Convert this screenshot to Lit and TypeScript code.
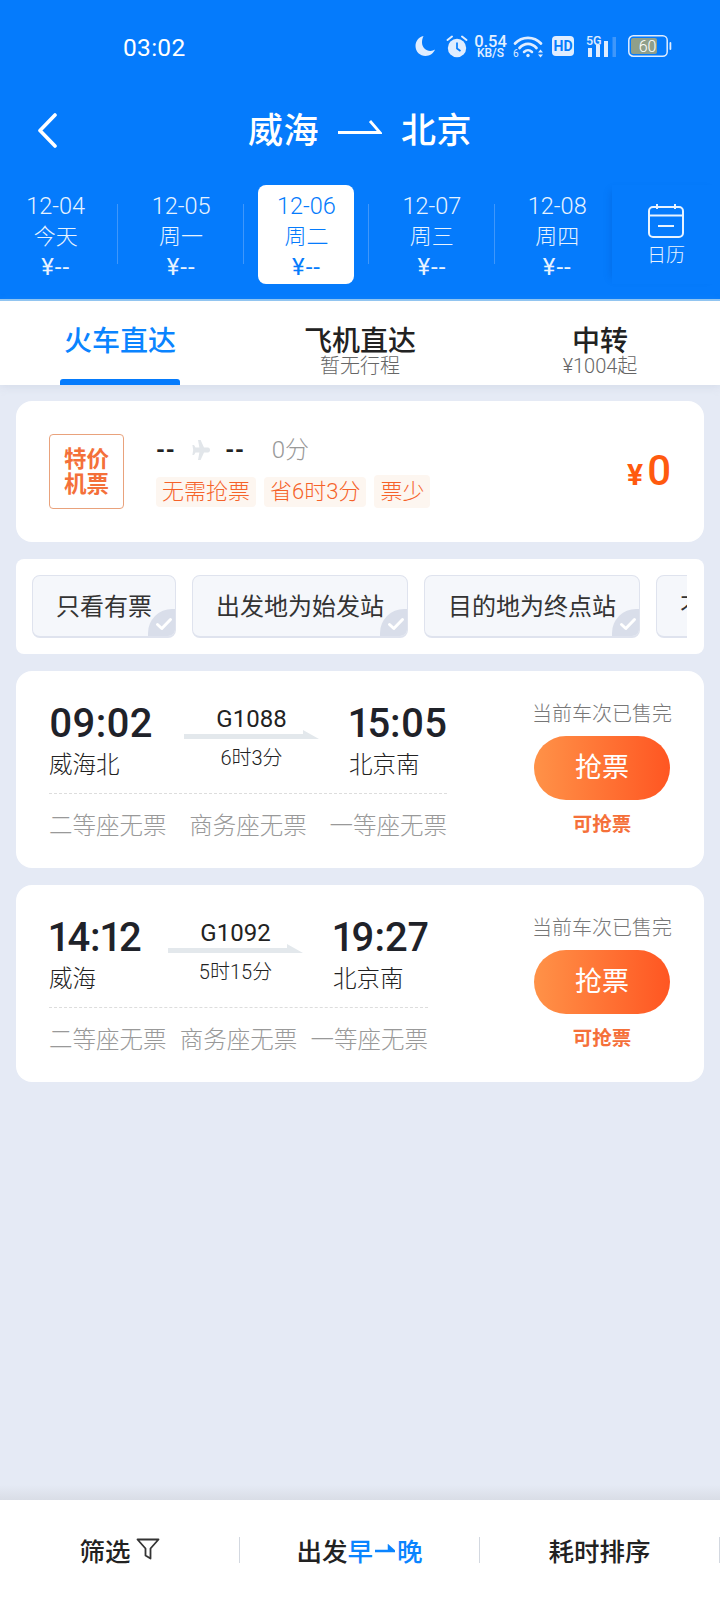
import { LitElement, html, css } from "lit";
import { customElement } from "lit/decorators.js";

const dates = [
  { d: "12-04", w: "今天" },
  { d: "12-05", w: "周一" },
  { d: "12-06", w: "周二", on: true },
  { d: "12-07", w: "周三" },
  { d: "12-08", w: "周四" },
];
const chips = ["只看有票", "出发地为始发站", "目的地为终点站", "不看无座"];
const trains = [
  { a: "09:02", b: "15:05", wa: 105, wb: 98, from: "威海北", to: "北京南", no: "G1088", dur: "6时3分" },
  { a: "14:12", b: "19:27", wa: 89, wb: 95, from: "威海", to: "北京南", no: "G1092", dur: "5时15分" },
];

@customElement("app-root")
export class AppRoot extends LitElement {
  static styles = css`
    :host {
      display: flex;
      flex-direction: column;
      width: 720px;
      height: 1600px;
      overflow: hidden;
      background: #e5eaf5;
      font-family: Roboto, "Noto Sans CJK SC", sans-serif;
      color: #222;
    }
    .head { background: #057bfc; color: #fff; height: 299px; border-bottom: 2px solid #8fc6f4; flex: none; }
    .status { display: flex; align-items: center; height: 92px; position: relative; }
    .time { margin-left: 123px; width: 291px; font-size: 24.5px; letter-spacing: .3px; position: relative; top: 1px; }
    .moon { margin-left: 1px; }
    .alarm { margin-left: 10px; }
    .speed { margin-left: 6px; width: 33px; display: flex; flex-direction: column; align-items: center; font-weight: 500; color: #e4f0ff; }
    .speed b { font-size: 16.5px; line-height: 13px; font-weight: 500; }
    .speed i { font-size: 12px; line-height: 10px; font-style: normal; }
    .wifi { margin-left: 6px; }
    .hd { margin-left: 8px; }
    .sig { margin-left: 12px; overflow: visible; }
    .batt { margin-left: 12px; }
    .title { height: 76px; display: flex; align-items: center; position: relative; }
    .back { margin-left: 36px; width: 24px; height: 36px; }
    .route { margin: 3px 0 0 188px; display: flex; align-items: center; font-size: 35px; font-weight: 500; line-height: 70px; }
    .route svg { margin: 0 19px 10px 19px; }
    .route span { letter-spacing: .5px; }
    .dates { display: flex; margin: 17px 0 0 -7px; height: 99px; }
    .day { position: relative; flex: none; width: 125.4px; display: flex; justify-content: center; }
    .day:not(:nth-child(5))::after { content: ""; position: absolute; right: 0; top: 19px; height: 60px; width: 1px; background: #3f97fb; }
    .pill { width: 96px; height: 99px; border-radius: 8px; display: flex; flex-direction: column; align-items: center; color: #e8f3ff; font-weight: 300; }
    .pill.on { background: #fff; color: #057bfc; }
    .pill .dd { font-size: 23.5px; line-height: 30px; margin-top: 6px; }
    .pill .ww { font-size: 22px; line-height: 30px; margin-top: 1px; }
    .pill .pp { font-size: 24px; line-height: 30px; letter-spacing: 1px; font-weight: 400; }
    .cal { margin-left: -8px; flex: none; width: 108px; display: flex; flex-direction: column; align-items: center; box-shadow: -6px 0 8px -6px rgba(0, 70, 170, .3); font-size: 19px; font-weight: 300; color: #e8f3ff; }
    .cal svg { margin-top: 19px; }
    .cal span { line-height: 30px; margin-top: 3px; }

    .tabs { flex: none; height: 84px; background: #fff; display: flex; box-shadow: 0 2px 8px rgba(180, 190, 210, .3); position: relative; }
    .tab { position: relative; display: flex; flex-direction: column; align-items: center; flex: none; }
    .tab:nth-child(1) { width: 120px; margin-left: 60px; }
    .tab:nth-child(2) { width: 120px; margin-left: 120px; }
    .tab:nth-child(3) { width: 120px; margin-left: 120px; }
    .tab strong { font-size: 28px; line-height: 30px; margin-top: 26px; font-weight: 500; color: #222; }
    .tab.on strong { color: #0a84ff; }
    .tab small { font-size: 20px; line-height: 18px; margin-top: 0; color: #666; font-weight: 300; }
    .tab .bar { position: absolute; left: 0; right: 0; bottom: 0; height: 6px; border-radius: 3px 3px 0 0; background: #057bfc; }

    .list { flex: 1; display: flex; flex-direction: column; gap: 17px; padding: 16px 16px 0; }
    .card { background: #fff; border-radius: 16px; }
    .deal { height: 141px; display: flex; align-items: flex-start; position: relative; }
    .badge { margin: 33px 0 0 33px; width: 75px; height: 75px; box-sizing: border-box; border: 1px solid #e9a27c; border-radius: 4px; color: #f4703a; font-size: 22.5px; font-weight: 700; line-height: 25px; display: flex; flex-direction: column; align-items: center; justify-content: center; }
    .deal-mid { margin: 32px 0 0 32px; }
    .deal-top { display: flex; align-items: center; height: 34px; color: #aaa; font-size: 24px; font-weight: 300; }
    .dash { color: #222; font-weight: 700; font-size: 23px; letter-spacing: .6px; }
    .deal-top svg { margin: 0 15px 0 17px; }
    .deal-top .dur { margin: 0 0 6px 27px; color: #999; }
    .tags { display: flex; align-items: center; gap: 8px; margin-top: 8px; }
    .tag { height: 30px; line-height: 30px; padding: 0 6px; background: #fdf6f0; color: #f5622a; font-size: 22px; font-weight: 300; border-radius: 4px; }
    .tag.tall { height: 33px; line-height: 33px; }
    .price { position: absolute; right: 33px; top: 47px; color: #ff5a0f; display: flex; align-items: baseline; gap: 4px; }
    .price i { font-style: normal; font-size: 30px; font-weight: 700; }
    .price b { font-size: 42px; font-weight: 500; line-height: 46px; }

    .filter { height: 95px; border-radius: 8px; padding: 16px 17px 0 16px; box-sizing: border-box; }
    .chips { display: flex; gap: 16px; overflow: hidden; }
    .chip { position: relative; flex: none; height: 63px; box-sizing: border-box; padding: 0 23px; border: 1px solid #dfe3ee; border-bottom-width: 2px; border-radius: 8px; background: #f5f7fb; font-size: 24px; font-weight: 400; line-height: 62px; color: #333; overflow: hidden; white-space: nowrap; }
    .corner { position: absolute; right: 0; bottom: 0; width: 27px; height: 27px; border-top-left-radius: 24px; background: #d9deea; display: flex; align-items: center; justify-content: center; }
    .corner svg { margin: 3px 0 0 4px; }

    .train { height: 197px; display: flex; position: relative; }
    .left { margin-left: 33px; display: inline-flex; flex-direction: column; padding-top: 28px; align-self: flex-start; }
    .row { display: flex; gap: 30px; }
    .end { display: flex; flex-direction: column; }
    .clock { font-size: 40px; line-height: 50px; font-weight: 500; color: #1f2229; white-space: nowrap; font-feature-settings: "pnum" 1; font-variant-numeric: proportional-nums; }
    .st { font-size: 23.5px; line-height: 34px; font-weight: 300; margin-top: -1px; white-space: nowrap; }
    .mid { width: 135px; display: flex; flex-direction: column; align-items: center; padding-top: 5px; }
    .mid b { font-weight: 400; font-size: 24px; line-height: 30px; }
    .mid svg { display: block; margin-top: -4px; }
    .mid span { font-size: 20px; font-weight: 300; line-height: 26px; margin-top: 6px; }
    .rule { border-top: 1px dashed #ddd; margin-top: 11px; }
    .seats { display: flex; justify-content: space-between; width: 0; min-width: 100%; margin-top: 15px; color: #999; font-size: 23.5px; font-weight: 300; line-height: 34px; white-space: nowrap; }
    .right { position: absolute; right: 32px; top: 28px; width: 140px; display: flex; flex-direction: column; align-items: center; }
    .sold { font-size: 20px; line-height: 30px; color: #777; font-weight: 300; white-space: nowrap; }
    .btn { width: 136px; height: 64px; margin-top: 7px; border-radius: 32px; background: linear-gradient(90deg, #ff9248, #ff5622); color: #fff; font-size: 27px; line-height: 64px; text-align: center; }
    .can { font-size: 19.5px; line-height: 30px; margin-top: 10px; color: #f5703a; font-weight: 700; }

    .foot { flex: none; position: relative; height: 100px; background: #fff; display: flex; align-items: center; }
    .foot::before { content: ""; position: absolute; left: 0; right: 0; top: -15px; height: 15px; background: linear-gradient(#e5eaf5, #d9dde6); }
    .fi { flex: none; width: 240px; height: 26px; box-sizing: border-box; padding-bottom: 2px; border-right: 1px solid #d3d8e0; display: flex; align-items: center; justify-content: center; font-size: 25.5px; font-weight: 500; color: #222; }
    .fi svg { margin-left: 5px; }
    .blue { color: #0a84ff; display: flex; align-items: center; }
    .blue svg { margin: 0 2px; }
  `;

  private planeIcon() {
    return html`<svg width="18" height="20" viewBox="0 0 18 20" fill="#e2e6ea"><path d="M6 0h2.600L12 7.500h4c1.200 0 2 1.100 2 2.500s-.8 2.500-2 2.500h-4L8.600 20H6l1.400-7.500H3.500L2 15H.4l.8-5-.8-5H2l1.500 2.500h3.900z"/></svg>`;
  }

  private check() {
    return html`<svg width="18" height="14" viewBox="0 0 18 14"><path d="M2.500 7.500l4.300 4L15.500 2.500" fill="none" stroke="#fff" stroke-width="3" stroke-linecap="round" stroke-linejoin="round"/></svg>`;
  }

  private statusIcons() {
    return html`
      <svg class="moon" width="21" height="22" viewBox="0 0 21 22"><path d="M8.500 1C3.800 2 .5 6 .5 11c0 5.700 4.500 10 10 10 4.300 0 8-2.600 9.600-6.400-1.400.9-3 1.400-4.700 1.400C10.800 16 7 12.300 7 7.500c0-2.500.6-4.700 1.500-6.500z" fill="#e0edff"/></svg>
      <svg class="alarm" width="22" height="23" viewBox="0 0 22 23">
        <circle cx="11" cy="13" r="9.200" fill="#e0edff"/>
        <path d="M11 7.500V13.500l3.500 2.500" fill="none" stroke="#057bfc" stroke-width="1.700"/>
        <path d="M1.500 5L6 1.500M20.500 5L16 1.500" stroke="#e0edff" stroke-width="2" stroke-linecap="round"/>
      </svg>
      <div class="speed"><b>0.54</b><i>KB/S</i></div>
      <svg class="wifi" width="31" height="23" viewBox="0 0 31 23" fill="none" stroke="#e0edff" stroke-linecap="round">
        <path d="M2 8.500C9 1 21 1 28 8.500" stroke-width="2.700"/>
        <path d="M6.500 13C11.500 7.500 18.500 7.500 23.500 13" stroke-width="2.700"/>
        <path d="M11 17C13.500 14.500 16.500 14.500 19 17" stroke-width="2.500"/>
        <circle cx="15" cy="20.500" r="1.700" fill="#e0edff" stroke="none"/>
        <path d="M25 17.500l2.500-3 2.500 3zM25 19.500l2.500 3 2.500-3z" fill="#e0edff" stroke="none"/>
        <text x="0" y="22" font-size="10" font-family="Roboto" fill="#e0edff" stroke="none">6</text>
      </svg>
      <svg class="hd" width="22" height="20" viewBox="0 0 22 20"><rect width="22" height="20" rx="4" fill="#e0edff"/><text x="11" y="15" text-anchor="middle" font-size="14" font-weight="700" font-family="Roboto" fill="#057bfc">HD</text></svg>
      <svg class="sig" width="30" height="21" viewBox="0 0 30 21">
        <text x="0" y="9" font-size="12.500" font-weight="500" font-family="Roboto" fill="#e0edff">5G</text>
        <rect x="2" y="12" width="4" height="9" fill="#e0edff"/>
        <rect x="10" y="9" width="4" height="12" fill="#e0edff"/>
        <rect x="18" y="5" width="4" height="16" fill="#e0edff"/>
        <rect x="26.500" y="1" width="3.500" height="20" fill="#3f97fb"/>
      </svg>
      <svg class="batt" width="44" height="22" viewBox="0 0 44 22">
        <rect x=".8" y=".8" width="38.400" height="20.400" rx="4.500" fill="none" stroke="#e0edff" stroke-width="1.500"/>
        <rect x="3" y="3" width="26" height="16" rx="2" fill="#8f9f8a"/>
        <rect x="41.500" y="7" width="1.800" height="8" rx=".9" fill="#e0edff"/>
        <text x="19.500" y="17" text-anchor="middle" font-size="16" font-weight="300" font-family="Roboto" fill="#fff">60</text>
      </svg>
    `;
  }

  render() {
    return html`
      <div class="head">
        <div class="status"><div class="time">03:02</div>${this.statusIcons()}</div>
        <div class="title">
          <svg class="back" viewBox="0 0 24 36"><path d="M19 3L4 18.500 19 34" fill="none" stroke="#fff" stroke-width="3.600" stroke-linecap="round" stroke-linejoin="round"/></svg>
          <div class="route">
            <span>威海</span>
            <svg width="44" height="16" viewBox="0 0 44 16"><path d="M0 13.500H42L32 2" fill="none" stroke="#fff" stroke-width="2.800"/></svg>
            <span>北京</span>
          </div>
        </div>
        <div class="dates">
          ${dates.map(
            (d) => html`<div class="day">
              <div class="pill ${d.on ? "on" : ""}">
                <div class="dd">${d.d}</div>
                <div class="ww">${d.w}</div>
                <div class="pp">¥--</div>
              </div>
            </div>`
          )}
          <div class="cal">
            <svg width="36" height="34" viewBox="0 0 36 34" fill="none" stroke="#e8f3ff" stroke-width="2">
              <rect x="1" y="3" width="34" height="30" rx="4"/>
              <path d="M1 11.500H35M9 0v5M27 0v5M10 22H26"/>
            </svg>
            <span>日历</span>
          </div>
        </div>
      </div>

      <div class="tabs">
        <div class="tab on"><strong>火车直达</strong><div class="bar"></div></div>
        <div class="tab"><strong>飞机直达</strong><small>暂无行程</small></div>
        <div class="tab"><strong>中转</strong><small>¥1004起</small></div>
      </div>

      <div class="list">
        <div class="card deal">
          <div class="badge"><span>特价</span><span>机票</span></div>
          <div class="deal-mid">
            <div class="deal-top">
              <span class="dash">--</span>${this.planeIcon()}<span class="dash">--</span>
              <span class="dur">0分</span>
            </div>
            <div class="tags">
              <span class="tag">无需抢票</span>
              <span class="tag">省6时3分</span>
              <span class="tag tall">票少</span>
            </div>
          </div>
          <div class="price"><i>¥</i><b>0</b></div>
        </div>

        <div class="card filter">
          <div class="chips">
            ${chips.map(
              (c) => html`<div class="chip">${c}<div class="corner">${this.check()}</div></div>`
            )}
          </div>
        </div>

        ${trains.map(
          (t) => html`<div class="card train">
            <div class="left">
              <div class="row">
                <div class="end" style="width:${t.wa}px"><div class="clock">${t.a}</div><div class="st">${t.from}</div></div>
                <div class="mid">
                  <b>${t.no}</b>
                  <svg width="135" height="9" viewBox="0 0 135 9"><path d="M0 4H119V0L135 9H0z" fill="#e3e8ec"/></svg>
                  <span>${t.dur}</span>
                </div>
                <div class="end" style="width:${t.wb}px"><div class="clock">${t.b}</div><div class="st">${t.to}</div></div>
              </div>
              <div class="rule"></div>
              <div class="seats"><span>二等座无票</span><span>商务座无票</span><span>一等座无票</span></div>
            </div>
            <div class="right">
              <div class="sold">当前车次已售完</div>
              <div class="btn">抢票</div>
              <div class="can">可抢票</div>
            </div>
          </div>`
        )}
      </div>

      <div class="foot">
        <div class="fi">筛选
          <svg width="24" height="22" viewBox="0 0 24 22" fill="none" stroke="#333" stroke-width="1.800" stroke-linejoin="round"><path d="M1.500 1.500H22.500L14.500 10.500V20.500L9.500 17.500V10.500z"/></svg>
        </div>
        <div class="fi">出发<span class="blue">早<svg width="20" height="10" viewBox="0 0 20 10"><path d="M0 7H19L14 2.500V6" fill="#0a84ff" stroke="#0a84ff" stroke-width="2.500"/></svg>晚</span></div>
        <div class="fi">耗时排序</div>
      </div>
    `;
  }
}
